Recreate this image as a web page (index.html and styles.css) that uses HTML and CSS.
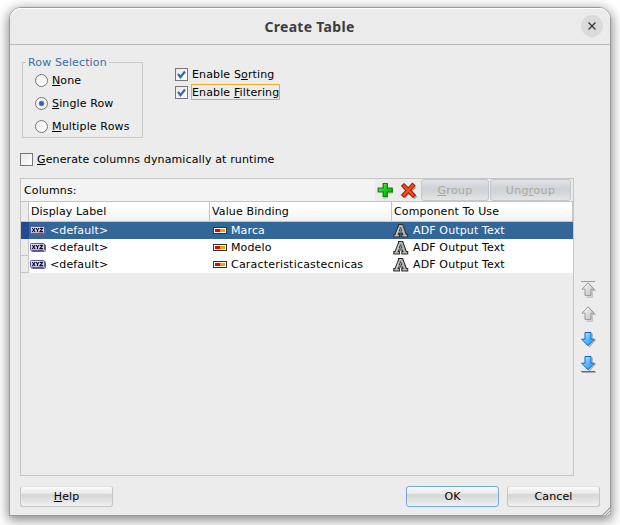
FILE: index.html
```html
<!DOCTYPE html>
<html lang="en">
<head>
<meta charset="utf-8">
<title>Create Table</title>
<link rel="stylesheet" href="styles.css">
</head>
<body>
<svg class="defs" width="0" height="0" aria-hidden="true">
  <defs>
    <linearGradient id="silver" x2="1" y2="1"><stop offset="0" stop-color="#fff"/><stop offset="1" stop-color="#bbb"/></linearGradient>
    <linearGradient id="blue" x2="1" y2="1"><stop offset="0" stop-color="#d4f3ff"/><stop offset=".5" stop-color="#55bbff"/><stop offset="1" stop-color="#168cf5"/></linearGradient>
    <linearGradient id="green" x2="1" y2="1"><stop offset="0" stop-color="#8cf58c"/><stop offset=".5" stop-color="#19c919"/><stop offset="1" stop-color="#12b012"/></linearGradient>
    <linearGradient id="badge" x2="0" y2="1"><stop offset="0" stop-color="#f4f4ff"/><stop offset="1" stop-color="#b7b7e6"/></linearGradient>
    <symbol id="xyz" viewBox="0 0 16 9">
      <rect x="1.500" y="1.500" width="14" height="7" rx="1" fill="none" stroke="#62628a"/>
      <rect x=".5" y=".5" width="14" height="7" rx="1" fill="url(#badge)" stroke="#5558a8"/>
      <path d="M2.300 2l2.800 4M5.100 2l-2.800 4M6 2l1.500 2v2M9 2l-1.500 2M9.800 2.400h2.700l-2.500 3.200h2.900" fill="none" stroke="#0c0c14" stroke-width="1.150"/>
    </symbol>
    <symbol id="attr" viewBox="0 0 14 7">
      <rect x=".5" y=".5" width="13" height="6" fill="#fff" stroke="#333"/>
      <path fill="#f00000" d="M2 2h5v3H2z"/><path fill="#ff9d00" d="M7 2h5v3H7z"/>
    </symbol>
    <symbol id="out" viewBox="0 0 16 16">
      <path d="M5.500 1.500h4.200L13.300 11.500h1.400v2.500H8.800v-2.500h1l-.6-1.500H5.800l-.5 1.500H6.500v2.500H.8v-2.500h1.300L5.500 3z" fill="#b5b5b5" stroke="#303030" stroke-width="1.100"/>
      <path d="M7.500 4.600l1.300 3.400H6.300z" fill="#fff" stroke="#343434"/>
      <path d="M5.900 4.500l-2.600 7.500" stroke="#e5e5e5" stroke-width=".7"/>
    </symbol>
    <symbol id="up" viewBox="0 0 15 16">
      <path d="M8 1.800l6.200 6.700h-3v6.700H5.500" fill="none" stroke="#bbb" stroke-width="1.200"/>
      <path d="M7 .8L13 7.200H10v6.300H4V7.200H1z" fill="url(#silver)" stroke="#999"/>
    </symbol>
    <symbol id="down" viewBox="0 0 15 16">
      <path d="M11.200 1.500v6.500h3L8 15" fill="none" stroke="#aaa" stroke-width="1.200"/>
      <path d="M4 .5h6v6.700h3.300L7 13.800.7 7.200H4z" fill="url(#blue)" stroke="#1265c8"/>
    </symbol>
  </defs>
</svg>
<main class="window">
  <header class="titlebar">
    <h1>Create Table</h1>
    <button class="close" aria-label="Close"><svg width="8" height="8" viewBox="0 0 8 8"><path d="M.5.5l7 7M7.500.5l-7 7" stroke="#3a3a3a" stroke-width="1.400"/></svg></button>
  </header>
  <section class="options">
    <fieldset class="group">
      <legend>Row Selection</legend>
      <label class="choice"><i class="radio"></i><span><u>N</u>one</span></label>
      <label class="choice"><i class="radio on"></i><span><u>S</u>ingle Row</span></label>
      <label class="choice"><i class="radio"></i><span><u>M</u>ultiple Rows</span></label>
    </fieldset>
    <div class="features">
      <label class="check"><i class="box"><svg width="9" height="9" viewBox="0 0 9 9"><path d="M1 3.800L3.400 7.200 8 1.500" fill="none" stroke="#3265bd" stroke-width="2.200"/></svg></i><span>Enable S<u>o</u>rting</span></label>
      <label class="check"><i class="box"><svg width="9" height="9" viewBox="0 0 9 9"><path d="M1 3.800L3.400 7.200 8 1.500" fill="none" stroke="#3265bd" stroke-width="2.200"/></svg></i><span class="focused">Enable <u>F</u>iltering</span></label>
    </div>
  </section>
  <label class="check dynamic"><i class="box"></i><span><u>G</u>enerate columns dynamically at runtime</span></label>
  <section class="editor">
    <div class="panel">
      <div class="toolbar">
        <span class="caption">Columns:</span>
        <div class="tools">
          <svg class="tool" width="17" height="17" viewBox="0 0 17 17"><path d="M10.500 2v5h5v4h-5v5H6" fill="none" stroke="#aaa"/><path d="M6.200 1.500h4v4.500h5v4h-5v4.500h-4V10h-5V6h5z" fill="url(#green)" stroke="#087c08" stroke-width="1.200"/></svg>
          <svg class="tool last" width="17" height="17" viewBox="0 0 17 17"><path d="M4 15L15 4M4 4l12 12" stroke="#aaa" stroke-width="4"/><path d="M2.500 14.500L14 2M2.500 2.500l12 12" stroke="#8c1800" stroke-width="4.400"/><path d="M3.200 13.800L13.400 2.700M3.200 3.200l10.600 10.600" stroke="#ff4a1c" stroke-width="2.500"/></svg>
          <button class="flat"><span><u>G</u>roup</span></button>
          <button class="flat wide"><span>Ung<u>r</u>oup</span></button>
        </div>
      </div>
      <div class="row head"><span></span><span>Display Label</span><span>Value Binding</span><span>Component To Use</span></div>
      <div class="row selected"><i class="gutter"></i><span><svg class="xyz"><use href="#xyz"/></svg>&lt;default&gt;</span><span><svg class="attr"><use href="#attr"/></svg>Marca</span><span><svg class="out"><use href="#out"/></svg>ADF Output Text</span></div>
      <div class="row"><i class="gutter"></i><span><svg class="xyz"><use href="#xyz"/></svg>&lt;default&gt;</span><span><svg class="attr"><use href="#attr"/></svg>Modelo</span><span><svg class="out"><use href="#out"/></svg>ADF Output Text</span></div>
      <div class="row"><i class="gutter"></i><span><svg class="xyz"><use href="#xyz"/></svg>&lt;default&gt;</span><span class="long"><svg class="attr"><use href="#attr"/></svg>Caracteristicastecnicas</span><span><svg class="out"><use href="#out"/></svg>ADF Output Text</span></div>
    </div>
    <nav class="movers">
      <svg width="15" height="18" viewBox="0 0 15 18"><path d="M0 1.500h14" stroke="#999"/><use href="#up" y="2" width="15" height="16"/></svg>
      <svg width="15" height="18" viewBox="0 0 15 18"><use href="#up" y="1" width="15" height="16"/></svg>
      <svg width="15" height="18" viewBox="0 0 15 18"><use href="#down" y="2" width="15" height="16"/></svg>
      <svg width="15" height="18" viewBox="0 0 15 18"><use href="#down" y="1" width="15" height="16"/><path d="M1 17.500h14" stroke="#aaa"/><path d="M0 16.500h14" stroke="#1f78e0"/></svg>
    </nav>
  </section>
  <footer class="actions">
    <button class="btn"><span><u>H</u>elp</span></button>
    <button class="btn primary">OK</button>
    <button class="btn">Cancel</button>
  </footer>
  <svg class="grip" width="10" height="10" viewBox="0 0 10 10"><path d="M1 10l9-9M4 10l6-6M7 10l3-3" stroke="#9c9c84" stroke-width="1.200"/><path d="M2.500 10L10 2.500M5.500 10L10 5.500M8.500 10L10 8.500" stroke="#fff" stroke-width=".8"/></svg>
</main>
</body>
</html>
```
FILE: styles.css
```css
* { box-sizing: border-box; }

body {
  margin: 0;
  width: 620px;
  height: 525px;
  overflow: hidden;
  padding: 7px 0 0 9px;
  background: #fff;
  color: #000;
  font: 11px/13px "DejaVu Sans", sans-serif;
  letter-spacing: .13px;
}

.defs { position: absolute; }
svg { display: block; flex: none; }
u { text-decoration: underline; text-underline-offset: 1px; text-decoration-thickness: 1px; text-decoration-skip-ink: none; }
button { font: inherit; color: inherit; padding: 0; letter-spacing: .1px; }

.window {
  position: relative;
  width: 602px;
  height: 509px;
  border: 1px solid #999;
  border-radius: 12px 12px 0 0;
  background: #ececec;
  box-shadow: 0 3px 12px 1px rgba(0, 0, 0, .48);
}

.titlebar {
  display: flex;
  align-items: center;
  height: 37px;
  padding: 0 7px 0 28px;
  border-bottom: 1px solid #b9b9b9;
  border-radius: 11px 11px 0 0;
  background: #ebebeb;
  box-shadow: inset 0 1px #fff;
}
.titlebar h1 {
  flex: 1;
  margin: 0;
  padding-top: 1px;
  text-align: center;
  color: #3d3d3d;
  font: bold 14px/20px "Noto Sans", sans-serif;
  letter-spacing: .3px;
}
.close {
  display: grid;
  place-items: center;
  width: 22px;
  height: 22px;
  border: 0;
  border-radius: 50%;
  background: #dadada;
}

.options { display: flex; height: 93px; padding: 11px 0 0 12px; }
.group {
  width: 121px;
  height: 82px;
  margin: 0;
  padding: 0 0 0 12px;
  border: 1px solid #c8c8c8;
}
.group legend { margin-left: -9px; padding: 0 2px; color: #3a6ea5; }
.choice { display: flex; align-items: center; gap: 4px; height: 23px; }
.radio {
  width: 13px;
  height: 13px;
  border: 1px solid #777;
  border-radius: 50%;
  background: linear-gradient(135deg, #eee, #fff);
}
.radio.on { background: radial-gradient(circle, #2b5fb8 0 1.5px, #6e97d6 2.6px, #f5f7fc 3.2px); }

.features { padding: 9px 0 0 32px; }
.check { display: flex; align-items: center; gap: 4px; height: 18px; }
.box {
  display: grid;
  place-items: center;
  width: 13px;
  height: 13px;
  border: 1px solid #777;
  background: linear-gradient(135deg, #e8e8e8, #fff);
}
.focused { padding-top: 1px; outline: 1px solid #f5a81c; }
.dynamic { margin: 12px 0 0 10px; }

.editor { display: flex; margin: 10px 0 0 10px; }
.panel { width: 554px; height: 298px; border: 1px solid #c5c5c5; }
.toolbar { display: flex; justify-content: space-between; height: 22px; background: #f3f3f3; }
.caption { padding: 5px 0 0 3px; }
.tools { display: flex; align-items: center; width: 198px; padding-left: 2px; background: #ececec; }
.tool { margin-right: 6px; }
.tool.last { margin-right: 4px; }
.flat {
  flex: none;
  width: 68px;
  height: 22px;
  border: 1px solid #c3c6ca;
  border-radius: 3px;
  background: linear-gradient(#e0e2e5, #cfd2d7 45%, #d2d5d9 60%, #e4e5e7);
  color: #aaa99c;
  letter-spacing: .35px;
}
.flat.wide { width: 81px; margin-left: 1px; }

.row {
  display: grid;
  grid-template-columns: 8px 181px 182px 181px;
  height: 17px;
  background: #fff;
}
.row > span { display: flex; align-items: center; }
.row > .long { letter-spacing: .2px; }
.head {
  height: 21px;
  border-top: 1px solid #c5c5c5;
  border-bottom: 1px solid #c5c5c5;
  background: linear-gradient(#fff 35%, #f1f1f1);
}
.head > span { padding-left: 2px; border-right: 1px solid #c5c5c5; }
.head > span:first-child { background: #ececec; }
.gutter { border-right: 1px solid #c5c5c5; border-bottom: 1px solid #c5c5c5; background: #ececec; }
.selected { background: #336699; color: #fff; }
.selected .gutter { background: #234b91; border-color: #234b91; }
.xyz { width: 16px; height: 9px; margin: 0 4px 0 1px; }
.attr { width: 14px; height: 7px; margin: 0 4px 1px; margin-left: 3px; }
.out { width: 16px; height: 16px; margin: 0 4px 0 1px; }

.movers { display: flex; flex-direction: column; gap: 7px; padding: 102px 0 0 7px; }

.actions { display: flex; gap: 8px; padding: 10px 10px 0; }
.btn {
  width: 93px;
  height: 21px;
  border: 1px solid #c6c6c6;
  border-top-color: #e2e2e2;
  border-radius: 3px;
  background: linear-gradient(#fafafa, #eaeaea 34%, #d6d6d6 36%, #dedede 60%, #f1f1f1);
}
.btn:first-child { margin-right: auto; }
.primary { border-color: #72a9e3; }
.grip { position: absolute; right: -1px; bottom: -1px; }
```
